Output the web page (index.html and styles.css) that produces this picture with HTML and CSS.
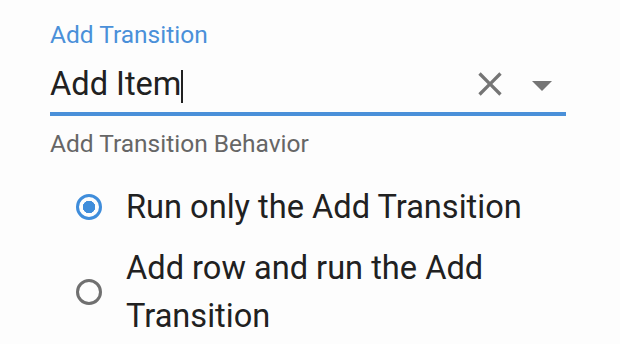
FILE: index.html
```html
<!DOCTYPE html>
<html lang="en">
<head>
    <meta charset="UTF-8">
    <meta name="viewport" content="width=device-width, initial-scale=1.0">
    <title>Add Transition</title>
    <link rel="stylesheet" href="styles.css">
</head>
<body>
    <div class="panel">
        <!-- Transition select -->
        <div class="field">
            <label class="field-label">Add Transition</label>
            <div class="field-row">
                <div class="field-value">Add Item<span class="caret"></span></div>
                <button class="icon-btn clear" type="button" aria-label="Clear">
                    <svg viewBox="0 0 24 24" width="40" height="40"><path d="M19 6.41L17.59 5 12 10.59 6.41 5 5 6.41 10.59 12 5 17.59 6.41 19 12 13.41 17.59 19 19 17.59 13.41 12z"/></svg>
                </button>
                <button class="icon-btn drop" type="button" aria-label="Open">
                    <svg viewBox="0 0 24 24" width="48" height="48"><path d="M7 10l5 5 5-5z"/></svg>
                </button>
            </div>
        </div>

        <!-- Behavior -->
        <div class="group-label">Add Transition Behavior</div>
        <div class="radio-group">
            <div class="radio-row">
                <span class="radio checked"></span>
                <span class="radio-text">Run only the Add Transition</span>
            </div>
            <div class="radio-row">
                <span class="radio"></span>
                <span class="radio-text">Add row and run the Add Transition</span>
            </div>
        </div>
    </div>
</body>
</html>
```

FILE: styles.css
```css
body {
    margin: 0;
    background-color: #fdfdfd;
    font-family: Roboto, "Liberation Sans", Arial, sans-serif;
    color: #212121;
}

.panel {
    padding: 21px 54px 0 50px;
}

.field-label {
    display: block;
    font-size: 24.5px;
    line-height: 28px;
    color: #4a90d9;
}

.field-row {
    display: flex;
    align-items: center;
    height: 40px;
    margin-top: 15px;
    padding-bottom: 8px;
    border-bottom: 4px solid #4a90d9;
}

.field-value {
    flex: 1;
    font-size: 32.6px;
    line-height: 40px;
    height: 40px;
}

.caret {
    display: inline-block;
    width: 2px;
    height: 33px;
    background-color: #212121;
    vertical-align: -8px;
}

.icon-btn {
    border: none;
    background: none;
    padding: 0;
    margin: 0;
    height: 40px;
    display: flex;
    align-items: center;
    fill: #757575;
}

.icon-btn svg {
    display: block;
    flex: none;
}

.icon-btn.clear {
    margin-right: 8px;
}

.icon-btn.drop svg {
    margin-top: 2px;
}

.group-label {
    margin-top: 14px;
    font-size: 24.5px;
    line-height: 28px;
    color: #666;
}

.radio-group {
    margin-top: 25px;
    padding-left: 15px;
    display: flex;
    flex-direction: column;
    gap: 13px;
}

.radio-row {
    display: flex;
    align-items: center;
    gap: 13px;
}

.radio {
    flex: none;
    width: 48px;
    height: 48px;
    display: flex;
    align-items: center;
    justify-content: center;
}

.radio::before {
    content: "";
    box-sizing: border-box;
    width: 26px;
    height: 26px;
    border: 3.5px solid #707070;
    border-radius: 50%;
}

.radio.checked::before {
    border-color: #3f8ddb;
    background: radial-gradient(circle, #3f8ddb 0 6px, transparent 6.5px);
}

.radio-text {
    font-size: 32.6px;
    line-height: 48px;
    padding-right: 40px;
}
```
